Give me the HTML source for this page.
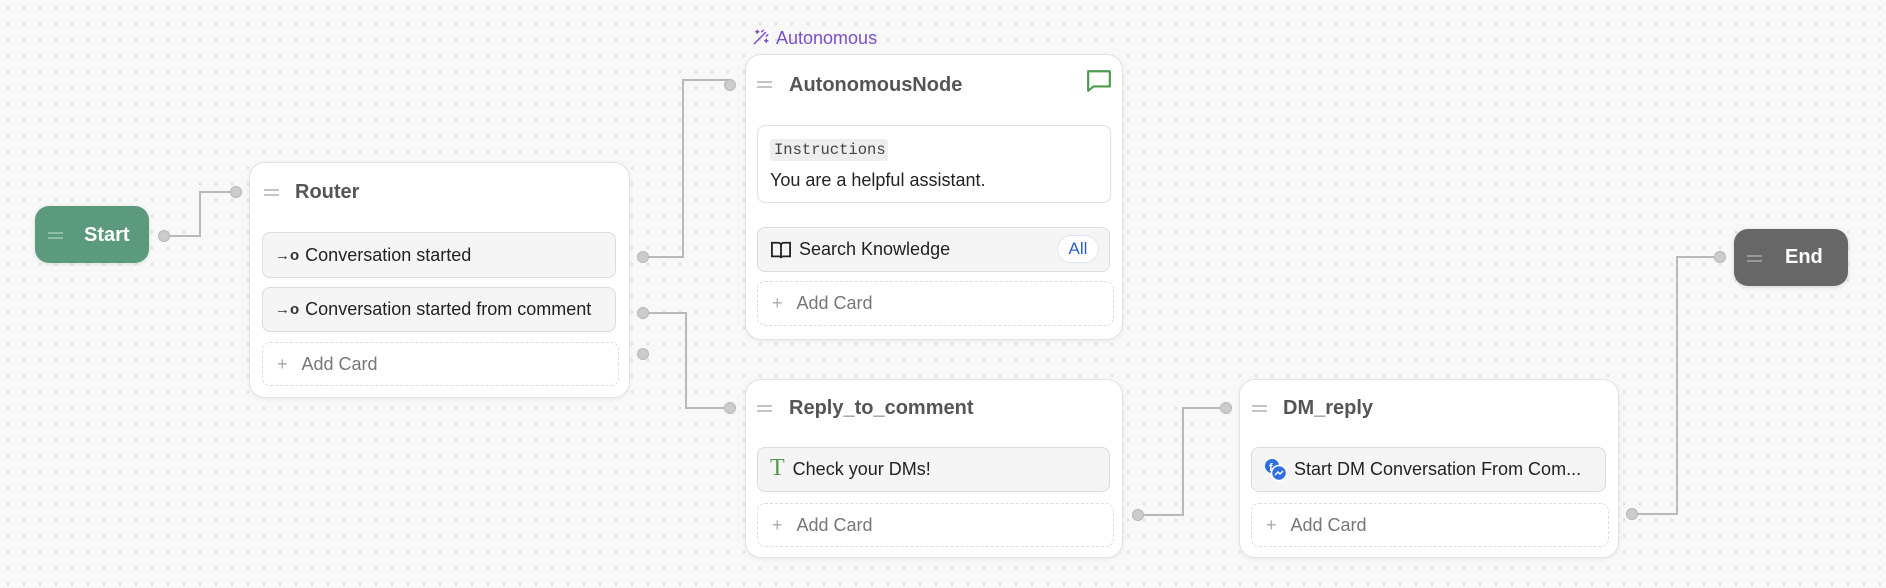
<!DOCTYPE html>
<html><head><meta charset="utf-8"><style>
*{box-sizing:border-box;margin:0;padding:0}
body{width:1886px;height:588px;overflow:hidden;background-color:#f8f8f8;background-image:radial-gradient(circle,#d9d9d9 1px,transparent 1.3px);background-size:16px 16px;font-family:"Liberation Sans",sans-serif;position:relative}
.a{position:absolute}
.node{position:absolute;background:#fff;border:1px solid #e2e2e2;border-radius:16px;box-shadow:0 1px 4px rgba(0,0,0,.06)}
.hd{position:absolute;font-size:20px;font-weight:bold;color:#555}
.grip{position:absolute;width:15px;height:7px;border-top:2px solid #c4c4c4;border-bottom:2px solid #c4c4c4}
.card{position:absolute;background:#f5f5f5;border:1px solid #dcdcdc;border-radius:8px;font-size:18px;color:#222;display:flex;align-items:center;padding-left:12px}
.add{position:absolute;border:1px dashed #ddd;border-radius:8px;font-size:18px;color:#777;display:flex;align-items:center;padding-left:14px}
.add span{color:#aaa;margin-right:14px;font-size:18px}
.h{position:absolute;width:12px;height:12px;border-radius:50%;background:#ccc;border:1px solid #b8b8b8;transform:translate(-6px,-6px)}
.arr{font-size:15px;margin-right:6px;font-weight:bold;color:#333}
</style></head><body>
<svg class="a" style="left:0;top:0" width="1886" height="588" fill="none" stroke="#b9b9b9" stroke-width="2">
<path d="M164 236 H200 V192 H236"/>
<path d="M643 257 H683 V80 H730"/>
<path d="M643 313 H686 V408 H730"/>
<path d="M1138 515 H1183 V408 H1226"/>
<path d="M1632 514 H1677 V257 H1720"/>
</svg>

<div class="a" style="left:35px;top:206px;width:114px;height:57px;background:#5b9a7d;border-radius:14px;box-shadow:0 1px 4px rgba(0,0,0,.12)"></div>
<div class="grip" style="left:48px;top:232px;border-color:#8fbfa7"></div>
<div class="a" style="left:84px;top:224px;font-size:20px;font-weight:bold;color:#fff">Start</div>
<div class="h" style="left:164px;top:236px"></div>

<div class="node" style="left:249px;top:162px;width:381px;height:236px"></div>
<div class="grip" style="left:264px;top:189px"></div>
<div class="hd" style="left:295px;top:181px">Router</div>
<div class="card" style="left:262px;top:232px;width:354px;height:46px"><span class="arr">→o</span>Conversation started</div>
<div class="card" style="left:262px;top:287px;width:354px;height:45px"><span class="arr">→o</span>Conversation started from comment</div>
<div class="add" style="left:262px;top:342px;width:357px;height:44px"><span>+</span>Add Card</div>
<div class="h" style="left:236px;top:192px"></div>
<div class="h" style="left:643px;top:257px"></div>
<div class="h" style="left:643px;top:313px"></div>
<div class="h" style="left:643px;top:354px"></div>

<svg class="a" style="left:752px;top:28px" width="18" height="18" viewBox="0 0 24 24" fill="none" stroke="#7a4fc4" stroke-width="2" stroke-linecap="round"><path d="M3 21L15 9M13 5l2-2M19 11l2-2M7 3v4M5 5h4M19 15v4M17 17h4M15 9l3-3"/></svg>
<div class="a" style="left:776px;top:28px;font-size:18px;color:#7a4fc4">Autonomous</div>
<div class="node" style="left:745px;top:54px;width:378px;height:286px"></div>
<div class="grip" style="left:757px;top:81px"></div>
<div class="hd" style="left:789px;top:74px">AutonomousNode</div>
<svg class="a" style="left:1086px;top:68px" width="26" height="26" viewBox="0 0 24 24" fill="none" stroke="#4e9a4e" stroke-width="2" stroke-linejoin="round"><path d="M2 3h20v14H7l-5 4z"/></svg>
<div class="a" style="left:757px;top:125px;width:354px;height:78px;border:1px solid #e0e0e0;border-radius:8px;background:#fff"></div>
<div class="a" style="left:770px;top:139px;width:118px;height:22px;background:#eee;border-radius:3px;font-family:'Liberation Mono',monospace;font-size:15.5px;color:#444;padding:2px 4px">Instructions</div>
<div class="a" style="left:770px;top:170px;font-size:18px;color:#222">You are a helpful assistant.</div>
<div class="card" style="left:757px;top:227px;width:353px;height:45px">
<svg width="22" height="20" viewBox="0 0 24 22" fill="none" stroke="#222" stroke-width="2" style="margin-right:7px"><path d="M2 3h7a3 3 0 0 1 3 3v14a2 2 0 0 0-2-2H2zM22 3h-7a3 3 0 0 0-3 3v14a2 2 0 0 1 2-2h8z"/></svg>Search Knowledge</div>
<div class="a" style="left:1057px;top:235px;width:42px;height:28px;border-radius:14px;background:#fff;border:1px solid #dbe6f5;color:#2b5fc4;font-size:17px;text-align:center;line-height:26px">All</div>
<div class="add" style="left:757px;top:281px;width:357px;height:45px"><span>+</span>Add Card</div>
<div class="h" style="left:730px;top:85px"></div>

<div class="node" style="left:745px;top:379px;width:378px;height:179px"></div>
<div class="grip" style="left:757px;top:405px"></div>
<div class="hd" style="left:789px;top:397px">Reply_to_comment</div>
<div class="card" style="left:757px;top:447px;width:353px;height:45px"><span style="color:#4e9a4e;font-size:24px;font-family:'Liberation Serif',serif;margin-right:8px;margin-top:-2px">T</span>Check your DMs!</div>
<div class="add" style="left:757px;top:503px;width:357px;height:44px"><span>+</span>Add Card</div>
<div class="h" style="left:730px;top:408px"></div>
<div class="h" style="left:1138px;top:515px"></div>

<div class="node" style="left:1239px;top:379px;width:380px;height:179px"></div>
<div class="grip" style="left:1252px;top:405px"></div>
<div class="hd" style="left:1283px;top:397px">DM_reply</div>
<div class="card" style="left:1251px;top:447px;width:355px;height:45px">
<svg width="24" height="24" viewBox="0 0 24 24" style="margin-right:6px"><circle cx="8" cy="8" r="7" fill="#2d6fe0"/><text x="5" y="13" font-size="11" font-weight="bold" fill="#fff" font-family="Liberation Sans">f</text><circle cx="15" cy="15" r="7.5" fill="#2d6fe0" stroke="#fff" stroke-width="1.5"/><path d="M11 17l3-3 2 2 3-3" stroke="#fff" stroke-width="1.5" fill="none"/></svg>Start DM Conversation From Com...</div>
<div class="add" style="left:1251px;top:503px;width:358px;height:44px"><span>+</span>Add Card</div>
<div class="h" style="left:1226px;top:408px"></div>
<div class="h" style="left:1632px;top:514px"></div>

<div class="a" style="left:1734px;top:229px;width:114px;height:57px;background:#676767;border-radius:14px;box-shadow:0 1px 4px rgba(0,0,0,.15)"></div>
<div class="grip" style="left:1747px;top:255px;border-color:#999"></div>
<div class="a" style="left:1785px;top:246px;font-size:20px;font-weight:bold;color:#fff">End</div>
<div class="h" style="left:1720px;top:257px"></div>
</body></html>
